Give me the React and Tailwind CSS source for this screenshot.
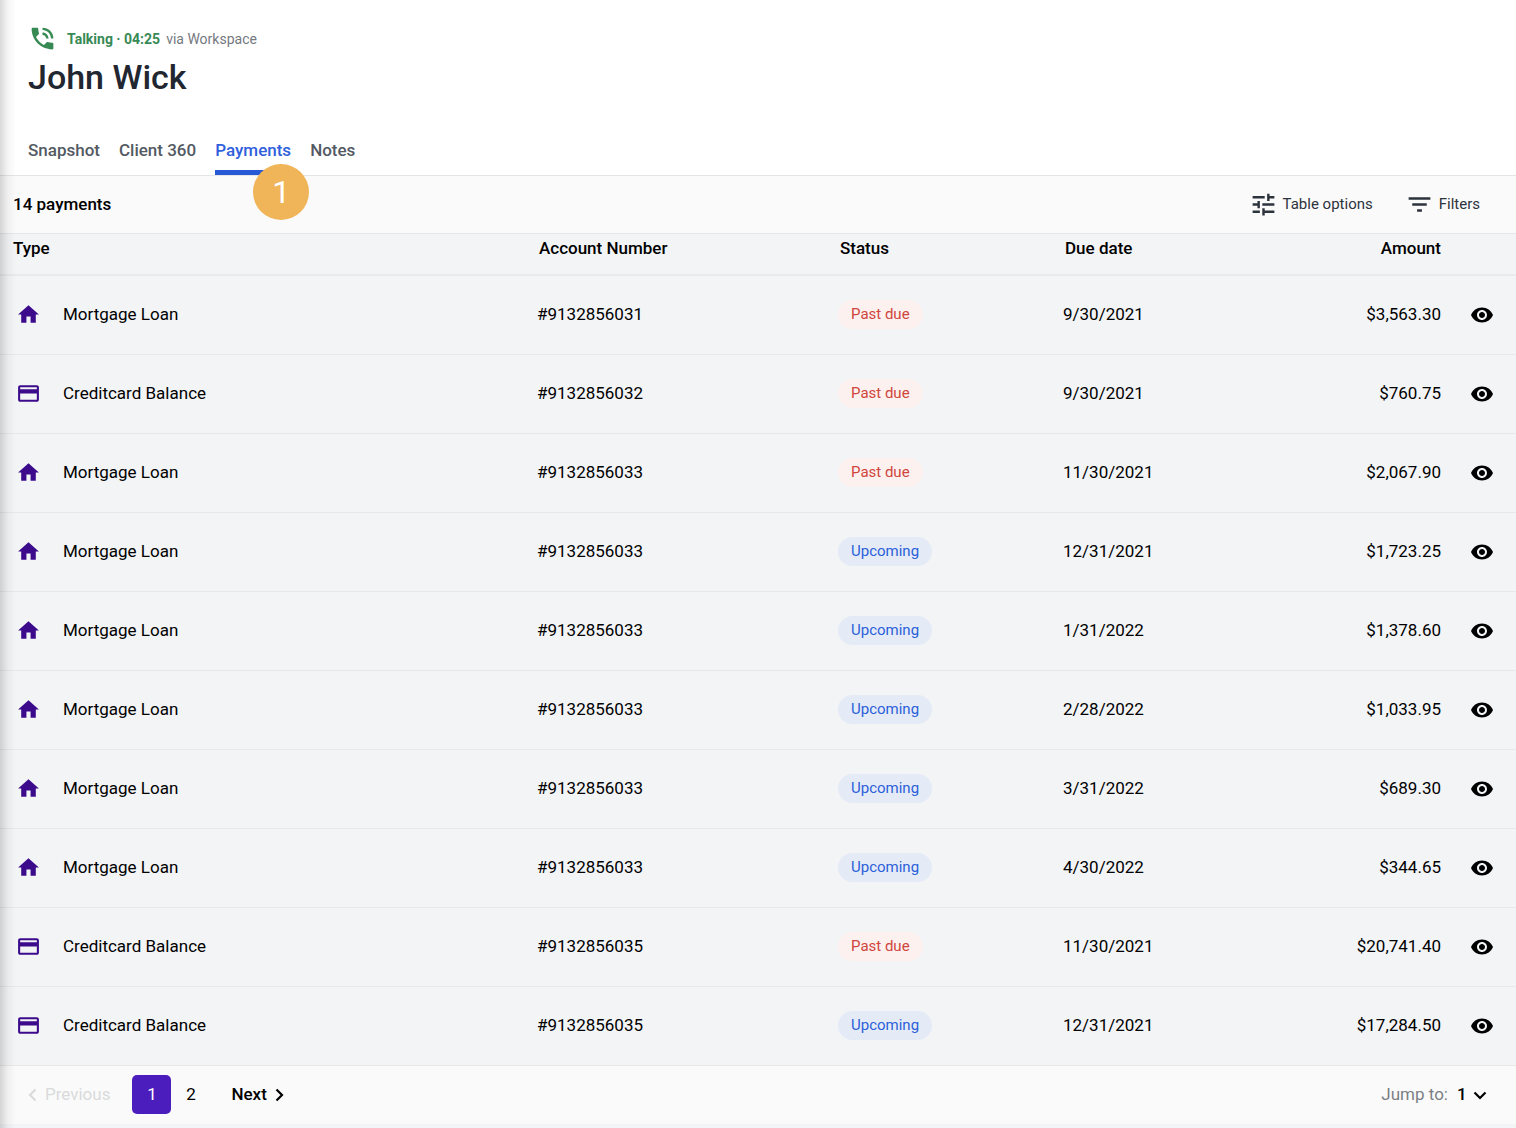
import React from 'react';
import {
    MdCreditCard,
    MdFilterList,
    MdHome,
    MdPhoneInTalk,
    MdTune,
    MdVisibility,
} from 'react-icons/md';

const tabs = ['Snapshot', 'Client 360', 'Payments', 'Notes'];

const payments = [
    { type: 'Mortgage Loan', account: '#9132856031', status: 'Past due', due: '9/30/2021', amount: '$3,563.30' },
    { type: 'Creditcard Balance', account: '#9132856032', status: 'Past due', due: '9/30/2021', amount: '$760.75' },
    { type: 'Mortgage Loan', account: '#9132856033', status: 'Past due', due: '11/30/2021', amount: '$2,067.90' },
    { type: 'Mortgage Loan', account: '#9132856033', status: 'Upcoming', due: '12/31/2021', amount: '$1,723.25' },
    { type: 'Mortgage Loan', account: '#9132856033', status: 'Upcoming', due: '1/31/2022', amount: '$1,378.60' },
    { type: 'Mortgage Loan', account: '#9132856033', status: 'Upcoming', due: '2/28/2022', amount: '$1,033.95' },
    { type: 'Mortgage Loan', account: '#9132856033', status: 'Upcoming', due: '3/31/2022', amount: '$689.30' },
    { type: 'Mortgage Loan', account: '#9132856033', status: 'Upcoming', due: '4/30/2022', amount: '$344.65' },
    { type: 'Creditcard Balance', account: '#9132856035', status: 'Past due', due: '11/30/2021', amount: '$20,741.40' },
    { type: 'Creditcard Balance', account: '#9132856035', status: 'Upcoming', due: '12/31/2021', amount: '$17,284.50' },
];

const Chevron = ({ d, className }) => (
    <svg
        viewBox="0 0 16 16"
        className={className}
        fill="none"
        stroke="currentColor"
        strokeWidth="2.2"
        aria-hidden="true"
    >
        <path d={d} />
    </svg>
);

const Header = () => (
    <header className="border-b border-[#e4e5e7] bg-white px-7 pt-6">
        <div className="flex items-center text-sm leading-7">
            <MdPhoneInTalk className="size-[29px] text-[#388a55]" />
            <span className="ml-[10px] font-bold text-[#388a55]">Talking · 04:25</span>
            <span className="ml-[6px] text-[#75797f]">via Workspace</span>
        </div>
        <h1 className="text-[34px] leading-12 font-medium text-[#212630]">John Wick</h1>
        <nav className="mt-[35px] flex gap-[19px] text-[17px] font-medium">
            {tabs.map((tab) => (
                <a
                    key={tab}
                    href="#"
                    aria-current={tab === 'Payments' ? 'page' : undefined}
                    className={`relative h-[39px] border-b-5 leading-7 ${tab === 'Payments' ? 'border-[#2759d6] text-[#2f60dc]' : 'border-transparent text-[#535a63]'}`}
                >
                    {tab}
                    {tab === 'Payments' && (
                        <span className="absolute top-7 left-[38px] z-10 flex size-14 items-center justify-center rounded-full bg-[#f0b459] font-[Roboto,sans-serif] text-[32px] font-normal text-white">
                            1
                        </span>
                    )}
                </a>
            ))}
        </nav>
    </header>
);

const Toolbar = () => (
    <div className="flex h-[58px] items-center border-b border-[#e6e7e9] bg-[#fafafa] pr-9 pl-[13px]">
        <h2 className="grow text-[17px] font-medium text-black">14 payments</h2>
        <button type="button" className="flex items-center gap-[5px] text-[15px] text-[#2d333c]">
            <MdTune className="size-[29px]" />
            Table options
        </button>
        <button type="button" className="ml-8 flex items-center gap-[5px] text-[15px] text-[#2d333c]">
            <MdFilterList className="size-[29px]" />
            Filters
        </button>
    </div>
);

const StatusBadge = ({ status }) => (
    <span
        className={`inline-block rounded-full px-[13px] text-[15px] leading-[29px] ${status === 'Upcoming' ? 'bg-[#e4ebf7] text-[#2b5fd9]' : 'bg-[#fcf1ef] text-[#d0453c]'}`}
    >
        {status}
    </span>
);

const PaymentsTable = () => (
    <table className="w-full table-fixed border-collapse text-[17px] text-black">
        <colgroup>
            <col />
            <col className="w-[301px]" />
            <col className="w-[225px]" />
            <col className="w-[225px]" />
            <col className="w-[179px]" />
            <col className="w-[61px]" />
        </colgroup>
        <thead>
            <tr className="h-[41px] border-b-2 border-[#e9eaec] text-left align-top leading-7">
                <th className="pl-[13px] font-medium">Type</th>
                <th className="pl-[14px] font-medium">Account Number</th>
                <th className="pl-[14px] font-medium">Status</th>
                <th className="pl-[14px] font-medium">Due date</th>
                <th className="pr-[14px] text-right font-medium">Amount</th>
                <th aria-label="View" />
            </tr>
        </thead>
        <tbody>
            {payments.map((payment, index) => (
                <tr key={index} className="h-[79px] border-b border-[#e6e8ea]">
                    <td className="pl-4">
                        <div className="flex items-center gap-[22px]">
                            {payment.type === 'Mortgage Loan' ? (
                                <MdHome className="size-[25px] text-[#3b0b8c]" />
                            ) : (
                                <MdCreditCard className="size-[25px] text-[#3b0b8c]" />
                            )}
                            {payment.type}
                        </div>
                    </td>
                    <td className="pl-3">{payment.account}</td>
                    <td className="pl-3">
                        <StatusBadge status={payment.status} />
                    </td>
                    <td className="pl-3">{payment.due}</td>
                    <td className="pr-[14px] text-right">{payment.amount}</td>
                    <td className="pl-[15px]">
                        <button type="button" aria-label="View payment" className="block">
                            <MdVisibility className="size-6" />
                        </button>
                    </td>
                </tr>
            ))}
        </tbody>
    </table>
);

const Pagination = () => (
    <footer className="flex h-[58px] items-center bg-[#fafafa] pr-7 pl-[25px] text-[17px] text-black">
        <button type="button" disabled className="flex items-center gap-1 text-[#d9dadb]">
            <Chevron d="M10.5 2.5 5 8l5.500 5.500" className="size-4" />
            Previous
        </button>
        <button type="button" aria-current="page" className="ml-[22px] size-[39px] rounded-[5px] bg-[#4c1dbd] text-white">
            1
        </button>
        <button type="button" className="h-[39px] w-[39px]">
            2
        </button>
        <button type="button" className="ml-[21px] flex items-center gap-1 font-medium">
            Next
            <Chevron d="M5.500 2.500 11 8l-5.500 5.500" className="size-4" />
        </button>
        <label htmlFor="jump" className="ml-auto text-[#7b7f85]">
            Jump to:
        </label>
        <div className="relative ml-[9px] flex items-center">
            <select id="jump" defaultValue="1" className="w-[31px] appearance-none bg-transparent font-medium">
                <option value="1">1</option>
                <option value="2">2</option>
            </select>
            <Chevron d="M2.500 5.500 8 11l5.500-5.500" className="pointer-events-none absolute right-0 size-4" />
        </div>
    </footer>
);

const App = () => {
    return (
        <div className="relative min-h-screen bg-[#f3f4f6] font-[Roboto,sans-serif]">
            <Header />
            <main>
                <Toolbar />
                <PaymentsTable />
                <Pagination />
            </main>
            <div className="pointer-events-none absolute inset-y-0 left-0 w-4 bg-linear-to-r from-black/15 via-black/4 to-transparent" />
        </div>
    );
};

export default App;
